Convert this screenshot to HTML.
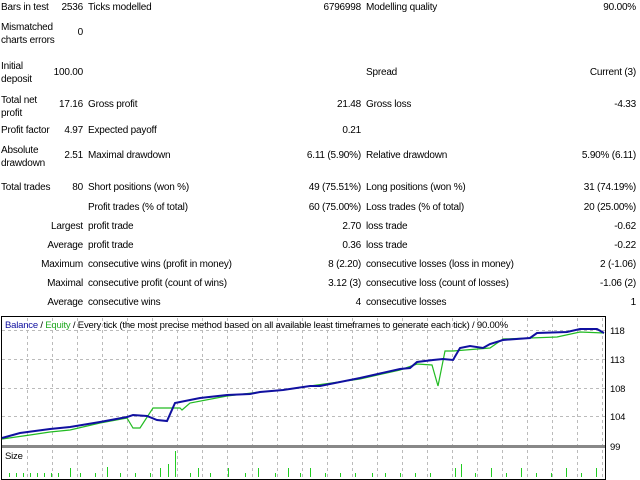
<!DOCTYPE html>
<html><head><meta charset="utf-8"><style>
body{margin:0;width:640px;height:480px;background:#fff;position:relative;overflow:hidden;font-family:"Liberation Sans",Arial,sans-serif;font-size:10px;letter-spacing:-0.2px;color:#000}
.t{position:absolute;white-space:nowrap;line-height:11px}
.r{text-align:right}
</style></head><body>
<div class="t" style="left:1px;top:2px">Bars in test</div><div class="t r" style="right:557px;top:2px">2536</div><div class="t" style="left:88px;top:2px">Ticks modelled</div><div class="t r" style="right:279px;top:2px">6796998</div><div class="t" style="left:366px;top:2px">Modelling quality</div><div class="t r" style="right:4px;top:2px">90.00%</div>
<div class="t" style="left:1px;top:21px;line-height:13px">Mismatched<br>charts errors</div><div class="t r" style="right:557px;top:27px">0</div>
<div class="t" style="left:1px;top:60px;line-height:13px">Initial<br>deposit</div><div class="t r" style="right:557px;top:67px">100.00</div><div class="t" style="left:366px;top:67px">Spread</div><div class="t r" style="right:4px;top:67px">Current (3)</div>
<div class="t" style="left:1px;top:94px;line-height:13px">Total net<br>profit</div><div class="t r" style="right:557px;top:99px">17.16</div><div class="t" style="left:88px;top:99px">Gross profit</div><div class="t r" style="right:279px;top:99px">21.48</div><div class="t" style="left:366px;top:99px">Gross loss</div><div class="t r" style="right:4px;top:99px">-4.33</div>
<div class="t" style="left:1px;top:125px">Profit factor</div><div class="t r" style="right:557px;top:125px">4.97</div><div class="t" style="left:88px;top:125px">Expected payoff</div><div class="t r" style="right:279px;top:125px">0.21</div>
<div class="t" style="left:1px;top:144px;line-height:13px">Absolute<br>drawdown</div><div class="t r" style="right:557px;top:150px">2.51</div><div class="t" style="left:88px;top:150px">Maximal drawdown</div><div class="t r" style="right:279px;top:150px">6.11 (5.90%)</div><div class="t" style="left:366px;top:150px">Relative drawdown</div><div class="t r" style="right:4px;top:150px">5.90% (6.11)</div>
<div class="t" style="left:1px;top:182px">Total trades</div><div class="t r" style="right:557px;top:182px">80</div><div class="t" style="left:88px;top:182px">Short positions (won %)</div><div class="t r" style="right:279px;top:182px">49 (75.51%)</div><div class="t" style="left:366px;top:182px">Long positions (won %)</div><div class="t r" style="right:4px;top:182px">31 (74.19%)</div>
<div class="t" style="left:88px;top:202px">Profit trades (% of total)</div><div class="t r" style="right:279px;top:202px">60 (75.00%)</div><div class="t" style="left:366px;top:202px">Loss trades (% of total)</div><div class="t r" style="right:4px;top:202px">20 (25.00%)</div>
<div class="t r" style="right:557px;top:221px">Largest</div><div class="t" style="left:88px;top:221px">profit trade</div><div class="t r" style="right:279px;top:221px">2.70</div><div class="t" style="left:366px;top:221px">loss trade</div><div class="t r" style="right:4px;top:221px">-0.62</div>
<div class="t r" style="right:557px;top:240px">Average</div><div class="t" style="left:88px;top:240px">profit trade</div><div class="t r" style="right:279px;top:240px">0.36</div><div class="t" style="left:366px;top:240px">loss trade</div><div class="t r" style="right:4px;top:240px">-0.22</div>
<div class="t r" style="right:557px;top:259px">Maximum</div><div class="t" style="left:88px;top:259px">consecutive wins (profit in money)</div><div class="t r" style="right:279px;top:259px">8 (2.20)</div><div class="t" style="left:366px;top:259px">consecutive losses (loss in money)</div><div class="t r" style="right:4px;top:259px">2 (-1.06)</div>
<div class="t r" style="right:557px;top:278px">Maximal</div><div class="t" style="left:88px;top:278px">consecutive profit (count of wins)</div><div class="t r" style="right:279px;top:278px">3.12 (3)</div><div class="t" style="left:366px;top:278px">consecutive loss (count of losses)</div><div class="t r" style="right:4px;top:278px">-1.06 (2)</div>
<div class="t r" style="right:557px;top:297px">Average</div><div class="t" style="left:88px;top:297px">consecutive wins</div><div class="t r" style="right:279px;top:297px">4</div><div class="t" style="left:366px;top:297px">consecutive losses</div><div class="t r" style="right:4px;top:297px">1</div>

<svg style="position:absolute;left:0;top:0" width="640" height="480">
<g stroke="#bbb" stroke-dasharray="3,3" stroke-width="1">
<line x1="27.5" y1="318" x2="27.5" y2="478"/><line x1="52.5" y1="318" x2="52.5" y2="478"/><line x1="77.5" y1="318" x2="77.5" y2="478"/><line x1="102.5" y1="318" x2="102.5" y2="478"/><line x1="127.5" y1="318" x2="127.5" y2="478"/><line x1="152.5" y1="318" x2="152.5" y2="478"/><line x1="177.5" y1="318" x2="177.5" y2="478"/><line x1="202.5" y1="318" x2="202.5" y2="478"/><line x1="227.5" y1="318" x2="227.5" y2="478"/><line x1="252.5" y1="318" x2="252.5" y2="478"/><line x1="277.5" y1="318" x2="277.5" y2="478"/><line x1="302.5" y1="318" x2="302.5" y2="478"/><line x1="327.5" y1="318" x2="327.5" y2="478"/><line x1="352.5" y1="318" x2="352.5" y2="478"/><line x1="377.5" y1="318" x2="377.5" y2="478"/><line x1="402.5" y1="318" x2="402.5" y2="478"/><line x1="427.5" y1="318" x2="427.5" y2="478"/><line x1="452.5" y1="318" x2="452.5" y2="478"/><line x1="477.5" y1="318" x2="477.5" y2="478"/><line x1="502.5" y1="318" x2="502.5" y2="478"/><line x1="527.5" y1="318" x2="527.5" y2="478"/><line x1="552.5" y1="318" x2="552.5" y2="478"/><line x1="577.5" y1="318" x2="577.5" y2="478"/><line x1="602.5" y1="318" x2="602.5" y2="478"/>
<line x1="2" y1="330.5" x2="605" y2="330.5"/><line x1="2" y1="359.5" x2="605" y2="359.5"/><line x1="2" y1="388.5" x2="605" y2="388.5"/><line x1="2" y1="416.5" x2="605" y2="416.5"/>
</g>
<rect x="1.5" y="316.5" width="604" height="163" fill="none" stroke="#000"/>
<rect x="2" y="445" width="603" height="3" fill="#888"/>
<polyline fill="none" stroke="#22bb22" stroke-width="1.2" points="2,439 30,435 50,432 70,430 100,423 127,418 133,428 140,428 153,408 180,408 182,410 190,403 227,396 260,392 283,390 310,386 360,379 400,370 417,364 432,365 438,386 445,351 453,351 490,348 503,339 557,337 580,332 604,333"/>
<polyline fill="none" stroke="#1010a0" stroke-width="2" points="2,438 20,433 50,429 70,427 100,422 127,417 133,415 147,416 157,420 167,421 175,403 200,398 227,395 250,394 260,392 283,390 310,386 320,386 360,378 400,369 410,368 417,362 433,360 443,359 453,360 460,348 470,346 483,348 490,344 503,340 530,338 537,333 567,332 580,329 597,329 604,333"/>
<g stroke="#22cc22" stroke-width="1">
<line x1="9.5" y1="473" x2="9.5" y2="477"/><line x1="16.5" y1="473" x2="16.5" y2="477"/><line x1="23.5" y1="473" x2="23.5" y2="477"/><line x1="30.5" y1="473" x2="30.5" y2="477"/><line x1="37.5" y1="473" x2="37.5" y2="477"/><line x1="44.5" y1="473" x2="44.5" y2="477"/><line x1="51.5" y1="473" x2="51.5" y2="477"/><line x1="58.5" y1="473" x2="58.5" y2="477"/><line x1="70.5" y1="468" x2="70.5" y2="477"/><line x1="80.5" y1="473" x2="80.5" y2="477"/><line x1="95.5" y1="473" x2="95.5" y2="477"/><line x1="107.5" y1="467" x2="107.5" y2="477"/><line x1="120.5" y1="473" x2="120.5" y2="477"/><line x1="135.5" y1="473" x2="135.5" y2="477"/><line x1="150.5" y1="473" x2="150.5" y2="477"/><line x1="160.5" y1="468" x2="160.5" y2="477"/><line x1="168.5" y1="464" x2="168.5" y2="477"/><line x1="175.5" y1="451" x2="175.5" y2="477"/><line x1="190.5" y1="473" x2="190.5" y2="477"/><line x1="198.5" y1="468" x2="198.5" y2="477"/><line x1="210.5" y1="473" x2="210.5" y2="477"/><line x1="228.5" y1="468" x2="228.5" y2="477"/><line x1="245.5" y1="473" x2="245.5" y2="477"/><line x1="258.5" y1="468" x2="258.5" y2="477"/><line x1="275.5" y1="473" x2="275.5" y2="477"/><line x1="288.5" y1="468" x2="288.5" y2="477"/><line x1="300.5" y1="473" x2="300.5" y2="477"/><line x1="310.5" y1="468" x2="310.5" y2="477"/><line x1="325.5" y1="473" x2="325.5" y2="477"/><line x1="340.5" y1="473" x2="340.5" y2="477"/><line x1="355.5" y1="473" x2="355.5" y2="477"/><line x1="372.5" y1="473" x2="372.5" y2="477"/><line x1="385.5" y1="473" x2="385.5" y2="477"/><line x1="400.5" y1="473" x2="400.5" y2="477"/><line x1="415.5" y1="473" x2="415.5" y2="477"/><line x1="430.5" y1="473" x2="430.5" y2="477"/><line x1="455.5" y1="468" x2="455.5" y2="477"/><line x1="461.5" y1="464" x2="461.5" y2="477"/><line x1="475.5" y1="473" x2="475.5" y2="477"/><line x1="491.5" y1="468" x2="491.5" y2="477"/><line x1="506.5" y1="473" x2="506.5" y2="477"/><line x1="521.5" y1="468" x2="521.5" y2="477"/><line x1="536.5" y1="473" x2="536.5" y2="477"/><line x1="551.5" y1="473" x2="551.5" y2="477"/><line x1="566.5" y1="468" x2="566.5" y2="477"/><line x1="581.5" y1="473" x2="581.5" y2="477"/><line x1="596.5" y1="468" x2="596.5" y2="477"/>
</g>
<g font-family="Liberation Sans,Arial,sans-serif" font-size="9.5" fill="#000" letter-spacing="-0.2">
<text x="610" y="334">118</text><text x="610" y="363">113</text><text x="610" y="392">108</text><text x="610" y="420">104</text><text x="610" y="450">99</text>
<text x="5" y="459">Size</text>
<text x="5" y="328"><tspan fill="#1010a0">Balance</tspan> / <tspan fill="#22aa22">Equity</tspan> / Every tick (the most precise method based on all available least timeframes to generate each tick) / 90.00%</text>
</g>
</svg>
</body></html>
